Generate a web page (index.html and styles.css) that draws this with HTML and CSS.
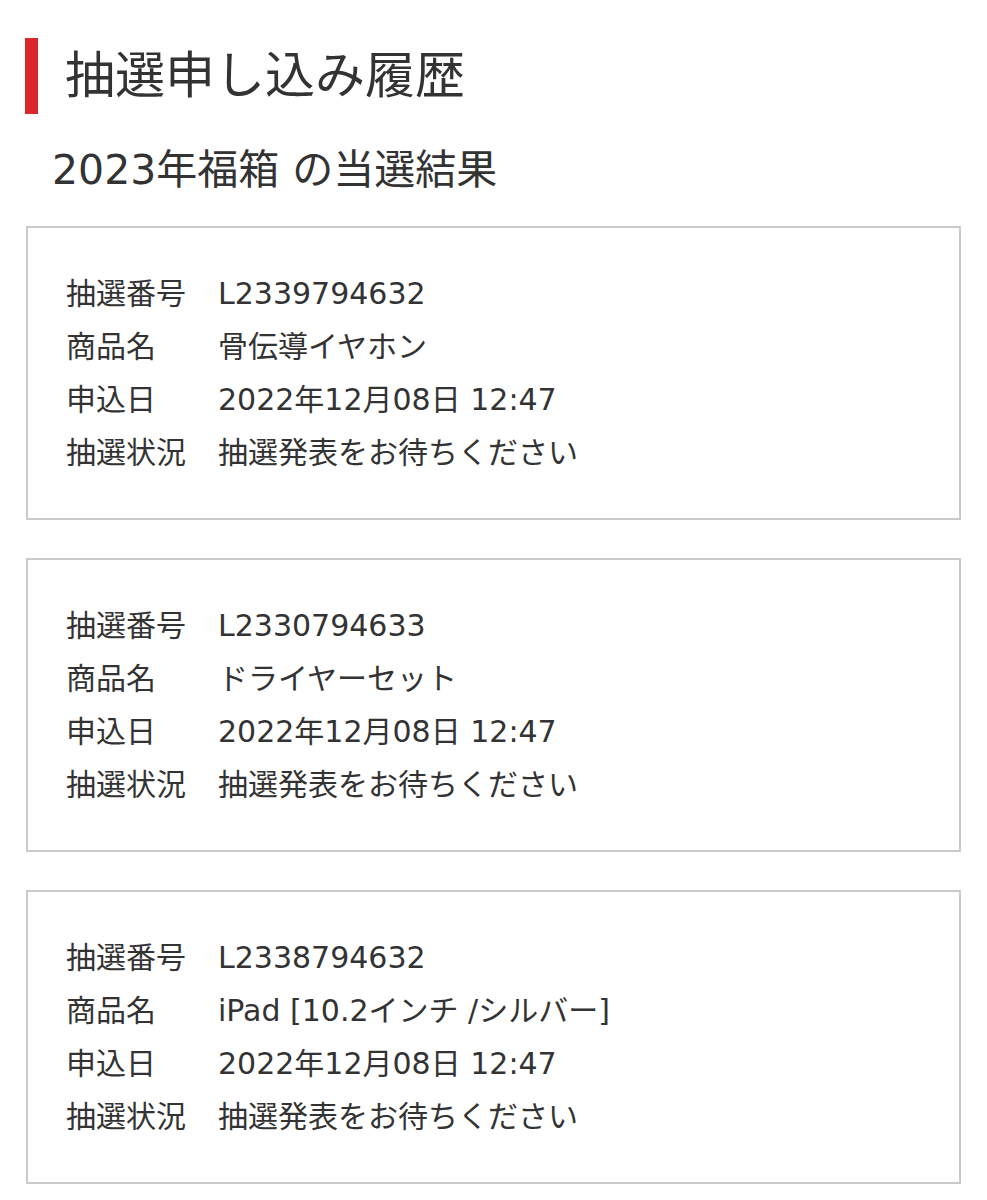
FILE: index.html
```html
<!DOCTYPE html>
<html lang="ja">
<head>
    <meta charset="UTF-8">
    <meta name="viewport" content="width=device-width, initial-scale=1.0">
    <title>抽選申し込み履歴</title>
    <link rel="stylesheet" href="styles.css">
</head>
<body>
    <div class="page">
        <h1 class="page-title">抽選申し込み履歴</h1>
        <h2 class="sub-title">2023年福箱 の当選結果</h2>

        <!-- 申し込み1 -->
        <div class="entry">
            <dl class="entry-list">
                <dt>抽選番号</dt><dd>L2339794632</dd>
                <dt>商品名</dt><dd>骨伝導イヤホン</dd>
                <dt>申込日</dt><dd>2022年12月08日 12:47</dd>
                <dt>抽選状況</dt><dd>抽選発表をお待ちください</dd>
            </dl>
        </div>

        <!-- 申し込み2 -->
        <div class="entry">
            <dl class="entry-list">
                <dt>抽選番号</dt><dd>L2330794633</dd>
                <dt>商品名</dt><dd>ドライヤーセット</dd>
                <dt>申込日</dt><dd>2022年12月08日 12:47</dd>
                <dt>抽選状況</dt><dd>抽選発表をお待ちください</dd>
            </dl>
        </div>

        <!-- 申し込み3 -->
        <div class="entry">
            <dl class="entry-list">
                <dt>抽選番号</dt><dd>L2338794632</dd>
                <dt>商品名</dt><dd>iPad [10.2インチ /シルバー]</dd>
                <dt>申込日</dt><dd>2022年12月08日 12:47</dd>
                <dt>抽選状況</dt><dd>抽選発表をお待ちください</dd>
            </dl>
        </div>
    </div>
</body>
</html>
```

FILE: styles.css
```css
body {
    margin: 0;
    background-color: #fff;
    color: #333;
    font-family: "DejaVu Sans", "Noto Sans CJK JP", sans-serif;
}
.page {
    padding: 38px 26px 0;
}
.page-title {
    margin: 0;
    height: 76px;
    line-height: 76px;
    font-size: 50px;
    font-weight: 400;
    border-left: 13px solid #d8282b;
    padding-left: 27px;
    margin-left: -1px;
}
.sub-title {
    margin: 31px 0 31px 26px;
    font-size: 41px;
    font-weight: 400;
    line-height: 50px;
}
.entry {
    border: 2px solid #cacaca;
    padding: 39px 38px 39px;
    margin-bottom: 38px;
}
.entry-list {
    display: grid;
    grid-template-columns: 152px 1fr;
    margin: 0;
    font-size: 30px;
    line-height: 53px;
}
.entry-list dt,
.entry-list dd {
    margin: 0;
}
```
